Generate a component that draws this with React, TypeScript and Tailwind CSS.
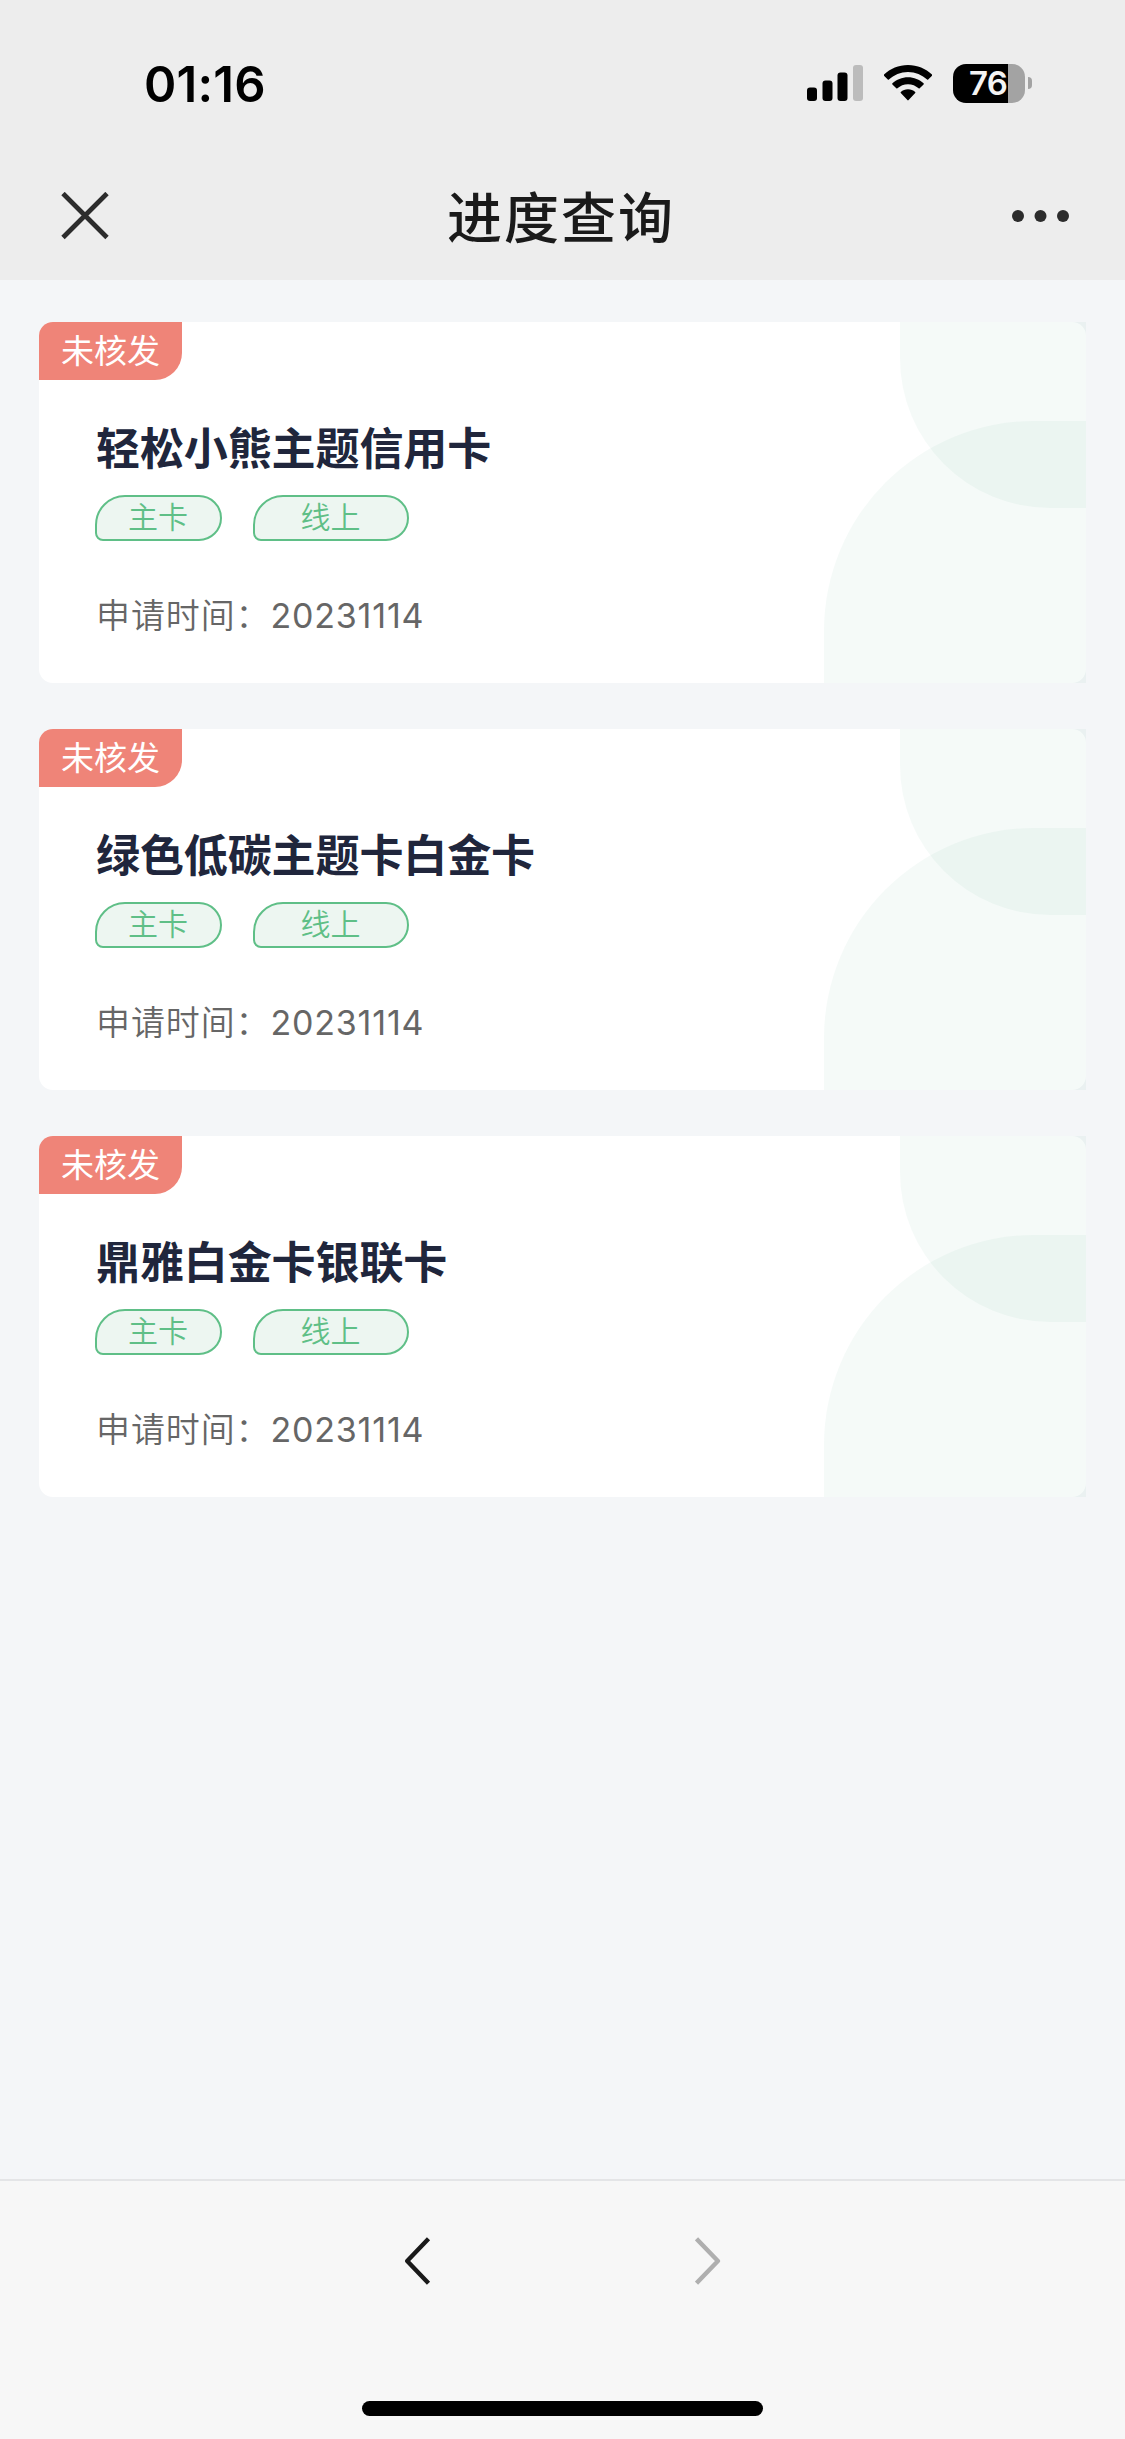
type Application = {
  name: string;
  status: string;
  tags: { label: string; className: string }[];
  date: string;
};

const tags = [
  { label: "主卡", className: "w-[127px]" },
  { label: "线上", className: "w-[156px]" },
];

const applications: Application[] = [
  { name: "轻松小熊主题信用卡", status: "未核发", tags, date: "20231114" },
  { name: "绿色低碳主题卡白金卡", status: "未核发", tags, date: "20231114" },
  { name: "鼎雅白金卡银联卡", status: "未核发", tags, date: "20231114" },
];

function StatusBar() {
  return (
    <div className="flex h-[167px] justify-between pl-[144px] pr-[93px] text-black">
      <span className="mt-[54px] text-[49px] font-semibold leading-[62px] tracking-[0.2px]">01:16</span>
      <div className="mt-[63px] flex h-10 items-center">
        <svg width="56" height="36" viewBox="0 0 56 36">
          <rect x="0" y="22.5" width="10" height="13.5" rx="3" />
          <rect x="15.5" y="15.5" width="10" height="20.5" rx="3" />
          <rect x="30.5" y="7.5" width="10" height="28.5" rx="3" />
          <rect x="46" y="0" width="10" height="36" rx="3" fill="#bcbcbc" />
        </svg>
        <svg className="ml-[21px]" width="48" height="36" viewBox="0 0 48 36">
          <path d="M24 0C33.3 0 41.8 3.6 48 9.6C48.3 9.9 48.3 10.4 48 10.7L44.2 14.6C43.9 14.9 43.4 14.9 43.1 14.6C38.1 9.9 31.4 7 24 7S9.9 9.9 4.9 14.6C4.6 14.9 4.1 14.9 3.8 14.6L0 10.7C-.3 10.4-.3 9.9 0 9.6C6.2 3.6 14.7 0 24 0Z" />
          <path d="M24 12.2C30 12.2 35.5 14.5 39.6 18.3C39.9 18.6 39.9 19.1 39.6 19.4L35.7 23.3C35.4 23.6 34.9 23.6 34.6 23.3C31.8 20.8 28.1 19.2 24 19.2S16.2 20.8 13.4 23.3C13.1 23.6 12.6 23.6 12.3 23.3L8.4 19.4C8.1 19.1 8.1 18.6 8.4 18.3C12.5 14.5 18 12.2 24 12.2Z" />
          <path d="M24 24.2C26.8 24.2 29.3 25.2 31.2 26.9C31.5 27.2 31.5 27.7 31.2 28L24.6 35.1C24.2 35.5 23.8 35.5 23.4 35.1L16.8 28C16.5 27.7 16.5 27.2 16.8 26.9C18.7 25.2 21.2 24.2 24 24.2Z" />
        </svg>
        <div className="ml-[21px] flex h-[39px] w-[72px] items-center justify-end overflow-hidden rounded-[13px] bg-[linear-gradient(to_right,#000_55px,#a3a3a3_55px)] pr-[18px] text-[33px] font-semibold leading-none tracking-[-0.8px] text-[#f4f4f4]">
          76
        </div>
        <div className="ml-[3px] h-3 w-1 rounded-r-full bg-[#a3a3a3]" />
      </div>
    </div>
  );
}

function Header() {
  return (
    <header className="h-[280px] bg-[#ededed]">
      <StatusBar />
      <div className="flex h-[98px] items-center justify-between pl-[61px] pr-[56px]">
        <svg width="49" height="49" viewBox="0 0 49 49" stroke="#2c2c2c" strokeWidth="4.8">
          <path d="M2 1.5L46 45.5M46 1.5L2 45.5" />
        </svg>
        <h1 className="pt-[3px] text-[55px] font-medium leading-[80px] tracking-[2px] text-[#1a1a1a]">进度查询</h1>
        <svg width="57" height="12" viewBox="0 0 57 12" fill="#2c2c2c">
          <circle cx="6" cy="6" r="6" />
          <circle cx="28.5" cy="6" r="6" />
          <circle cx="51" cy="6" r="6" />
        </svg>
      </div>
    </header>
  );
}

function ApplicationCard({ item }: { item: Application }) {
  return (
    <article className="relative h-[361px] rounded-[14px] bg-white">
      {/* decorative shapes on the right side */}
      <div className="absolute right-0 top-0 h-[186px] w-[186px] rounded-bl-[150px] bg-[rgba(85,170,140,0.06)]" />
      <div className="absolute bottom-0 right-0 h-[262px] w-[262px] rounded-tl-[210px] bg-[rgba(85,170,140,0.06)]" />

      <div className="flex h-[58px] w-[143px] items-center justify-center rounded-br-[27px] rounded-tl-[14px] bg-[#ef8478] text-[33px] leading-none text-white">
        {item.status}
      </div>
      <div className="pl-[56px]">
        <h2 className="ml-px mt-[37px] text-[44px] font-bold leading-[64px] tracking-[-0.1px] text-[#20263c]">
          {item.name}
        </h2>
        <div className="mt-[14px] flex gap-[31px]">
          {item.tags.map((tag) => (
            <span
              key={tag.label}
              className={`${tag.className} flex h-[46px] items-center justify-center rounded-bl-[8px] rounded-br-[23px] rounded-tl-[30px] rounded-tr-[23px] border-2 border-[#5fbf87] bg-[#edf6f1] pb-[2px] pr-px text-[30px] font-[350] leading-none text-[#5fbf87]`}
            >
              {tag.label}
            </span>
          ))}
        </div>
        <p className="ml-px mt-[50px] flex text-[34px] leading-[50px] text-[#666]">
          <span className="font-[350] tracking-[0.9px]">申请时间：</span>
          <span className="tracking-[0.8px]">{item.date}</span>
        </p>
      </div>
    </article>
  );
}

function BottomBar() {
  return (
    <footer className="flex h-[260px] flex-col items-center justify-between border-t-2 border-[#e4e5e7] bg-[#f7f7f7] pb-[23px] pt-[56px]">
      <div className="flex gap-[264px]">
        <svg width="26" height="48" viewBox="0 0 26 48" fill="none" stroke="#1a1a1a" strokeWidth="4.4" strokeLinejoin="round">
          <path d="M23.5 1.8L2.2 24L23.5 46.2" />
        </svg>
        <svg width="26" height="48" viewBox="0 0 26 48" fill="none" stroke="#afafaf" strokeWidth="4.4" strokeLinejoin="round">
          <path d="M1.5 1.8L22.9 24L1.5 46.2" />
        </svg>
      </div>
      <div className="h-[15px] w-[401px] rounded-full bg-black" />
    </footer>
  );
}

export default function App() {
  return (
    <div className="flex h-[2439px] w-[1125px] flex-col bg-[#f4f6f8] font-['Inter','Noto_Sans_CJK_SC',sans-serif]">
      <Header />
      <main className="flex flex-1 flex-col gap-[46px] px-[39px] pt-[42px]">
        {applications.map((item) => (
          <ApplicationCard key={item.name} item={item} />
        ))}
      </main>
      <BottomBar />
    </div>
  );
}
